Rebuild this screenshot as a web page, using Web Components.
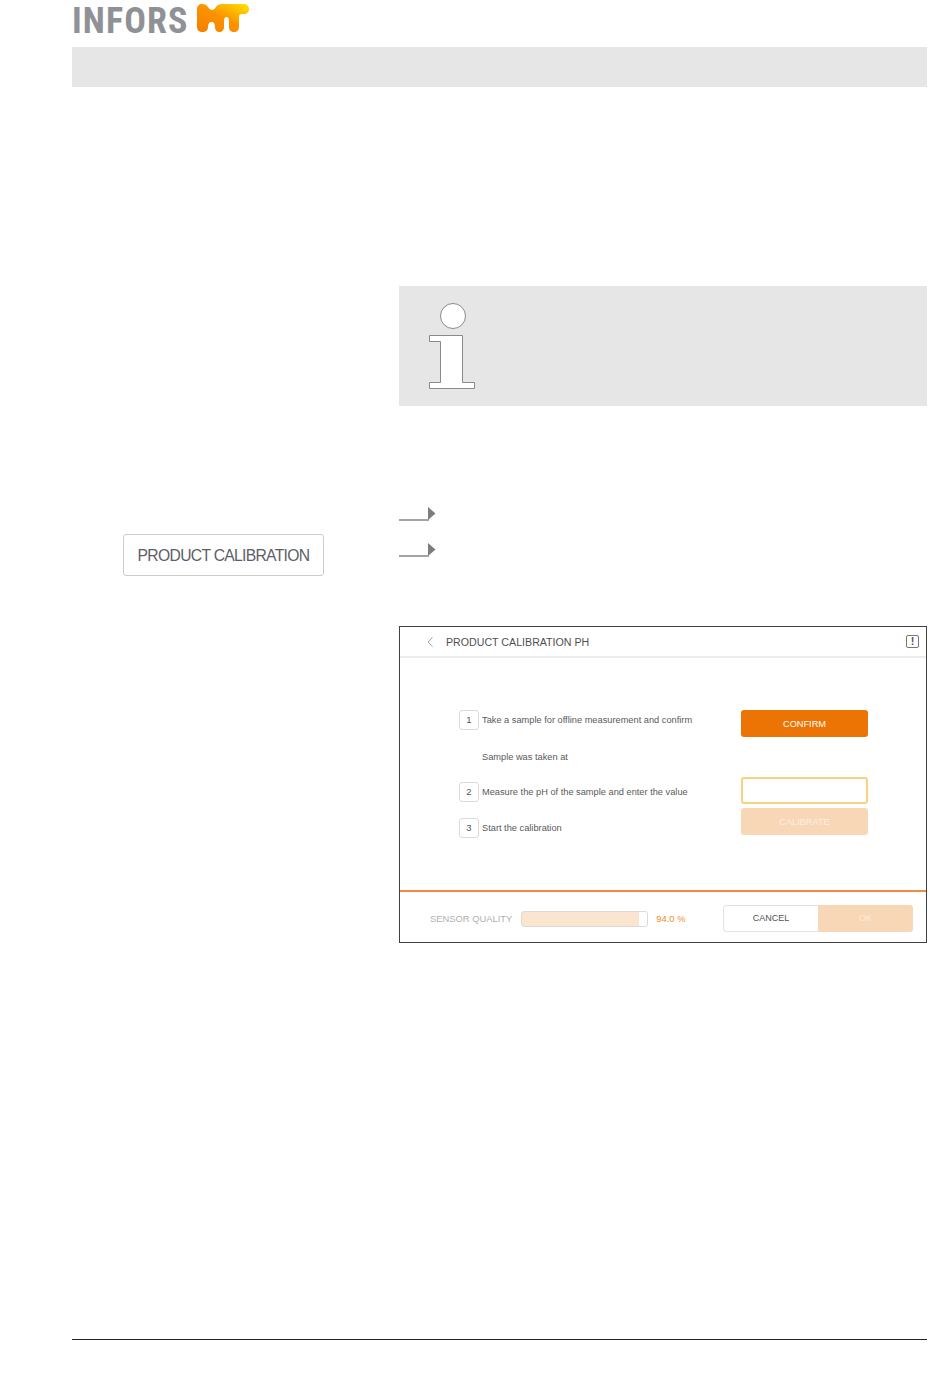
<!DOCTYPE html>
<html><head><meta charset="utf-8">
<style>
html,body{margin:0;background:#fff;font-family:"Liberation Sans",Arial,sans-serif;}
</style></head><body>
<manual-page>
  <brand-logo></brand-logo>
  <chapter-bar></chapter-bar>
  <info-note></info-note>
  <action-block></action-block>
  <calibration-screen></calibration-screen>
  <page-footer></page-footer>
</manual-page>
<script>
function def(name, html){
  customElements.define(name, class extends HTMLElement{
    constructor(){super();this.attachShadow({mode:'open'}).innerHTML=html;}
  });
}
def('manual-page',`<style>:host{display:flex;flex-direction:column;width:950px;height:1387px;padding:0 23px 0 72px;box-sizing:border-box;overflow:hidden}</style><slot></slot>`);
def('brand-logo',`<style>
:host{display:flex;height:47px;align-items:flex-start;gap:8px}
.t{font:700 36px/42px "Liberation Sans Narrow","Roboto Condensed",Roboto,sans-serif;letter-spacing:1.1px;color:#8f9195;width:117px;white-space:nowrap}
svg{display:block;margin-top:3px}
</style>
<div class="t">INFORS</div>
<svg width="54" height="30" viewBox="0 0 54 30" style="margin-left:-1px"><defs><linearGradient id="g" x1="0" y1="1" x2="1" y2="0"><stop offset="0" stop-color="#f57f00"/><stop offset=".5" stop-color="#fb9200"/><stop offset="1" stop-color="#ffe600"/></linearGradient></defs>
<path fill="url(#g)" d="M1 6C1 3 3 1 6 1C9 1 11 2 12 4C13 6 15 7 16 7C17 7 19 6 20 4C21 2 23 1 26 1H48C51 1 53 3 53 6C53 9 51 11 48 11H46C44 11 43 12 43 14V24C43 27 41 29 38 29C35 29 33 27 33 24V18C33 15 32 14 30.500 14C29 14 28 15 28 18V24C28 27 26 29 23.500 29C21 29 19 27 19 24C19 21 18 19 15.500 19C13 19 12 21 12 24C12 27 10 29 6.500 29C3 29 1 27 1 24Z"/></svg>`);
def('chapter-bar',`<style>:host{display:block;height:40px;background:#e6e6e6}</style>`);
def('info-note',`<style>
:host{display:block;height:120px;margin:199px 0 0 327px;background:#e6e6e6;padding:16px 0 0 30px;box-sizing:border-box}
svg{display:block}
</style>
<svg width="47" height="88" viewBox="0 0 47 88"><circle cx="24" cy="14" r="12.5" fill="#fff" stroke="#6f6f6f" stroke-width=".8"/>
<path d="M.5 33.500H33.500V80.500H45.500V86.500H.5V80.500H11.500V39.500H.5Z" fill="#fff" stroke="#6f6f6f" stroke-width=".8"/></svg>`);
def('step-arrow',`<style>:host{display:block;height:14px}svg{display:block}</style>
<svg width="37" height="14" viewBox="0 0 37 14"><path d="M0 13H30" stroke="#7d7d7d" stroke-width="1.400"/><path d="M29 0L36.500 6.500L29 13Z" fill="#7d7d7d"/></svg>`);
def('action-block',`<style>
:host{display:grid;grid-template-columns:327px 1fr;height:119px;margin-top:101px}
.l{padding:27px 0 0 51px}
.b{width:201px;height:42px;box-sizing:border-box;border:1px solid #cfccc6;border-radius:3px;font-size:15.700px;letter-spacing:-.7px;line-height:41px;color:#5b6067;text-align:center;white-space:nowrap}
.r{display:flex;flex-direction:column;gap:22px}
</style>
<div class="l"><div class="b">PRODUCT CALIBRATION</div></div>
<div class="r"><step-arrow></step-arrow><step-arrow></step-arrow></div>`);
def('step-num',`<style>:host{display:flex;width:20px;height:20px;box-sizing:border-box;border:1px solid #dedbd5;border-radius:3px;align-items:center;justify-content:center;font-size:9.500px;color:#555;flex:none;padding-bottom:1px}</style><slot></slot>`);
def('screen-header',`<style>
:host{display:flex;align-items:center;height:29px;border-bottom:2px solid #ececec;position:relative;font-size:10.650px;color:#4f4f4f;flex:none}
.c{margin:0 12px 0 27px;display:block}
.i{position:absolute;right:7px;top:8px;width:13px;height:13px;box-sizing:border-box;border:1px solid #777;border-radius:2px;text-align:center;font:700 11px/11px "Liberation Sans",sans-serif;color:#555}
</style>
<svg class="c" width="7" height="10" viewBox="0 0 7 10"><path d="M5.500 .5L1 5L5.500 9.500" fill="none" stroke="#888" stroke-width=".8"/></svg>
<span>PRODUCT CALIBRATION PH</span><span class="i">!</span>`);
def('screen-body',`<style>
:host{display:grid;grid-template-columns:282px 127px;justify-content:start;height:234px;box-sizing:border-box;padding:52px 0 0 59px;font-size:9.250px;color:#5a5a5a;flex:none;border-bottom:2px solid #f08b40;grid-template-rows:27px 27px 27px 31px}
.s{display:flex;align-items:flex-start;gap:3px;white-space:nowrap}
.s span{line-height:20px}
.n{padding-left:23px;line-height:20px;padding-top:10px;box-sizing:border-box}
.btn{height:27px;border-radius:3px;text-align:center;line-height:28px;font-size:9.200px;box-sizing:border-box}
.c{background:#ec7404;color:#fff}
.in{border:2px solid #f9d27e;background:#fff;margin-top:13px}
.d{background:#f8d7b6;color:#fdeee0;margin-top:17px}
.s2{margin-top:18px}.s3{margin-top:27px}
</style>
<div class="s"><step-num>1</step-num><span>Take a sample for offline measurement and confirm</span></div><div class="btn c">CONFIRM</div>
<div class="n">Sample was taken at</div><div></div>
<div class="s s2"><step-num>2</step-num><span>Measure the pH of the sample and enter the value</span></div><div class="btn in"></div>
<div class="s s3"><step-num>3</step-num><span>Start the calibration</span></div><div class="btn d">CALIBRATE</div>`);
def('screen-footer',`<style>
:host{display:flex;align-items:center;flex:1;padding:3px 13px 0 30px;font-size:9.400px;color:#b0b0b0;white-space:nowrap}
.bar{width:127px;height:16px;box-sizing:border-box;border:1px solid #dcdad6;border-radius:3px;margin-left:9px;background:linear-gradient(90deg,#fbe5cf 94%,#fff 94%)}
.v{color:#f08a2c;margin-left:8px;width:38px}
.seg{display:flex;margin-left:auto;width:190px;height:27px;box-sizing:border-box;border-radius:3px;overflow:hidden;text-align:center;line-height:25px;font-size:9px}
.ca{flex:0 0 95px;box-sizing:border-box;border:1px solid #e4e2de;border-right:0;border-radius:3px 0 0 3px;color:#555}
.ok{flex:1;background:#f8d7b6;color:#fcebd9;line-height:27px}
</style>
<span>SENSOR QUALITY</span><div class="bar"></div><span class="v">94.0 %</span>
<div class="seg"><div class="ca">CANCEL</div><div class="ok">OK</div></div>`);
def('calibration-screen',`<style>:host{display:flex;flex-direction:column;height:317px;margin:0 0 0 327px;box-sizing:border-box;border:1px solid #404040}</style>
<screen-header></screen-header><screen-body></screen-body><screen-footer></screen-footer>`);
def('page-footer',`<style>:host{display:block;height:1px;background:#222;margin-top:396px}</style>`);
</script>
</body></html>
